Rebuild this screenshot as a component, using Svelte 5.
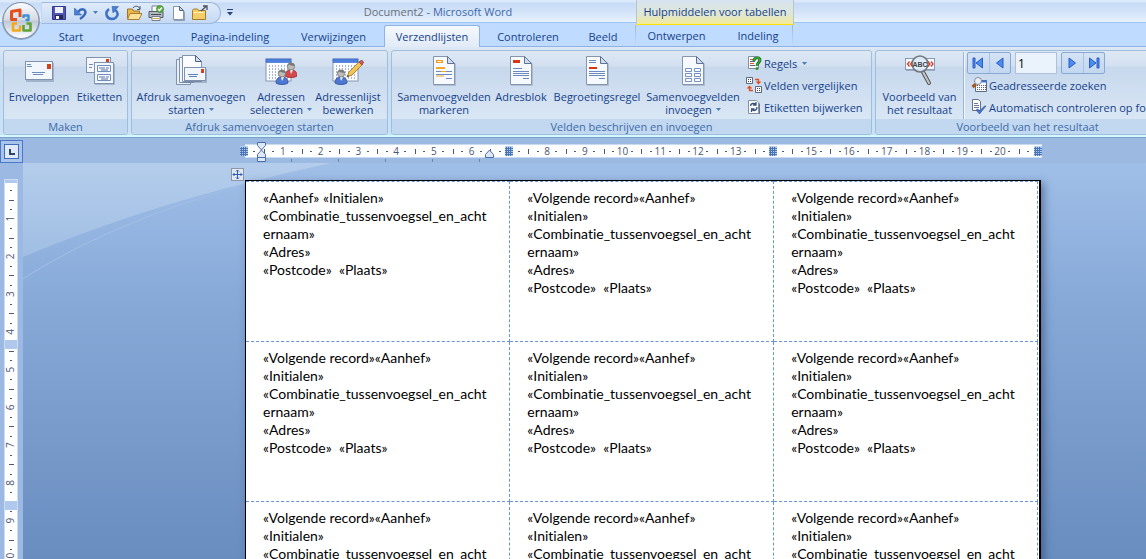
<script lang="ts">
	type Tab = { label: string; active?: boolean; context?: boolean };

	const tabs: Tab[] = [
		{ label: 'Start' },
		{ label: 'Invoegen' },
		{ label: 'Pagina-indeling' },
		{ label: 'Verwijzingen' },
		{ label: 'Verzendlijsten', active: true },
		{ label: 'Controleren' },
		{ label: 'Beeld' },
		{ label: 'Ontwerpen', context: true },
		{ label: 'Indeling', context: true }
	];

	const firstLabel = [
		'«Aanhef» «Initialen»',
		'«Combinatie_tussenvoegsel_en_acht',
		'ernaam»',
		'«Adres»',
		'«Postcode»  «Plaats»'
	];

	const nextLabel = [
		'«Volgende record»«Aanhef»',
		'«Initialen»',
		'«Combinatie_tussenvoegsel_en_acht',
		'ernaam»',
		'«Adres»',
		'«Postcode»  «Plaats»'
	];

	const rows = [
		[firstLabel, nextLabel, nextLabel],
		[nextLabel, nextLabel, nextLabel],
		[nextLabel, nextLabel, nextLabel]
	];

	// One centimetre on the rulers at 100% zoom
	const CM = 37.75;
	const hMarks = Array.from({ length: 84 }, (_, i) => i + 1);
	const vMarks = Array.from({ length: 42 }, (_, i) => i + 1);
	const tabStops = Array.from({ length: 5 }, (_, i) => 46 + i * 47);
	const columnMarks = [-1, 264, 528, 793];

	let record = $state('1');
</script>

{#snippet caret()}
	<svg class="caret" width="5" height="3" viewBox="0 0 5 3"><path d="M0 0h5L2.5 3z" fill="#4a7ebb" /></svg>
{/snippet}

{#snippet sheet()}
	<path d="M6 3h14l8 7v22H6z" fill="#8898b0" opacity=".45" />
	<path d="M5.500 2.500h14l7 7v21h-21z" fill="#f6f9fe" stroke="#8595ae" />
	<path d="M19.500 2.500v7h7z" fill="#cfdcf0" stroke="#5f7494" />
{/snippet}

{#snippet person(x: number, y: number, shirt: string, dark: string)}
	<g transform="translate({x} {y})">
		<path d="M0 14c0-4 2-6 6-6s6 2 6 6c-3 2-9 2-12 0z" fill={shirt} stroke={dark} stroke-width=".8" />
		<path d="M5 8l1 4 2-4z" fill="#fff" />
		<circle cx="6" cy="4.500" r="3.600" fill="#bcbcb8" stroke="#747474" stroke-width=".8" />
		<path d="M2.300 4.500C2 0 10 0 9.800 4 7 4 5 3 4 2.500z" fill="#777" />
	</g>
{/snippet}

{#snippet calendar()}
	<rect x="1" y="5" width="25" height="22" fill="#f9fbff" stroke="#8796ad" />
	<rect x="1" y="5" width="25" height="3.500" fill="#4b7fe0" stroke="#3766c4" stroke-width=".6" />
	<path d="M4 12h20M4 15h20M4 18h20M4 21h20M4 24h20" stroke="#62718c" stroke-dasharray="1 2" />
{/snippet}

{#snippet bigIcon(name: string)}
	<svg width="32" height="32" viewBox="0 0 32 32" aria-hidden="true">
		{#if name === 'envelope'}
			<rect x="3" y="9" width="28" height="19" fill="#6d7f9b" opacity=".45" />
			<rect x="2.500" y="7.500" width="27" height="18" fill="#f2f6fd" stroke="#7f92b0" />
			<rect x="24" y="10" width="4" height="5" fill="#d8401c" />
			<path d="M4 10.500h4M4 12.500h5M9 18.500h13M10 20.500h10" stroke="#6f8cc0" />
		{:else if name === 'labels'}
			<rect x="2.500" y="3.500" width="24" height="15" fill="#f4f7fd" stroke="#7f92b0" />
			<rect x="22" y="5" width="3" height="3" fill="#d8401c" />
			<path d="M5 10.500h4M5 13.500h3" stroke="#6f8cc0" />
			<rect x="11" y="10" width="20" height="21" fill="#6d7f9b" opacity=".4" />
			<rect x="10.500" y="8.500" width="19" height="21" fill="#f2f6fd" stroke="#7f92b0" />
			<path d="M13.500 11.500h13v6h-13zM13.500 20.500h13v6h-13z" fill="#fff" stroke="#6f8cc0" />
			<path d="M15 14h6M22 14h3M17 16h7M15 23h6M22 23h3M17 25h7" stroke="#4d6da8" />
		{:else if name === 'merge'}
			<path d="M1.500 5.500h14v25h-14z" fill="#e8eef8" stroke="#8192ad" />
			<path d="M4.500 3.500h14v25h-14z" fill="#f0f4fb" stroke="#8192ad" />
			<path d="M7.500 1.500h13l6 6v20h-19z" fill="#fafcff" stroke="#8192ad" />
			<path d="M20.500 1.500v6h6z" fill="#d4e0f2" stroke="#4f6484" />
			<rect x="10" y="15" width="22" height="14" fill="#6d7f9b" opacity=".45" />
			<rect x="9.500" y="13.500" width="21" height="13" fill="#f2f6fd" stroke="#7f92b0" />
			<rect x="26" y="15" width="3" height="4" fill="#d8401c" />
			<path d="M13 20.500h10M14 22.500h8" stroke="#5f80bd" />
		{:else if name === 'recipients'}
			{@render calendar()}
			{@render person(20, 8, '#d4494e', '#9e2026')}
			{@render person(11, 15, '#4e77d2', '#2a4d9d')}
		{:else if name === 'edit-list'}
			{@render calendar()}
			{@render person(3, 15, '#4e77d2', '#2a4d9d')}
			<path d="M15 23l2-5L27 8l3 3-10 10z" fill="#f2c651" stroke="#9a6e24" stroke-width=".8" />
			<path d="M27 8l2-1.500c1-.7 3 1.500 2.300 2.500L30 11z" fill="#d35b5b" stroke="#8e3434" stroke-width=".7" />
			<path d="M15 23l1-2 1.200 1.200z" fill="#333" />
		{:else if name === 'highlight'}
			{@render sheet()}
			<path d="M8 7.500h7" stroke="#f29a1c" stroke-width="3" />
			<path d="M9.500 7.500h4" stroke="#fff" />
			<path d="M8 14h9" stroke="#f5a52a" stroke-width="2" />
			<path d="M8 17.500h5M18 17.500h6M8 20.500h16M18 24.500h6" stroke="#6b8ac2" />
			<path d="M13 17.500h5M8 22h8" stroke="#f5a52a" />
		{:else if name === 'address'}
			{@render sheet()}
			<rect x="8" y="6" width="7" height="3" fill="#d8360f" />
			<path d="M8 14.500h9M8 17.500h16M8 19.500h16M8 21.500h16M18 24.500h6" stroke="#6b8ac2" />
		{:else if name === 'greeting'}
			{@render sheet()}
			<rect x="8" y="13" width="8" height="2" fill="#d8360f" />
			<path d="M8 6.500h7M8 8.500h7M8 17.500h16M8 19.500h16M8 21.500h16M18 24.500h6" stroke="#6b8ac2" />
		{:else if name === 'field'}
			{@render sheet()}
			{#each [14.5, 19.5, 24.5] as y}
				<path d="M8.500 {y}h6v3h-6zM17.500 {y}h6v3h-6z" fill="#fff" stroke="#7590c2" />
			{/each}
		{:else if name === 'preview'}
			<rect x="1.500" y="4.500" width="29" height="11" fill="#f4f8ff" stroke="#8a9ab5" />
			<path d="M2 16.500h29" stroke="#71829c" opacity=".5" />
			<path d="M5.500 7.500L3.500 10l2 2.500M8.500 7.500L6.500 10l2 2.500M24 7.500l2 2.500-2 2.500M27 7.500l2 2.500-2 2.500" fill="none" stroke="#dd3a22" stroke-width="1.300" />
			<path d="M19 18l6 11" stroke="#555" stroke-width="4" stroke-linecap="round" />
			<path d="M19 18l6 11" stroke="#c3c6ca" stroke-width="2" stroke-linecap="round" />
			<circle cx="16" cy="10" r="8" fill="#dce9f7" fill-opacity=".9" stroke="#72777e" stroke-width="1.600" />
			<text x="16" y="13" text-anchor="middle" font-family="Liberation Sans" font-size="7" font-weight="bold" fill="#444">ABC</text>
		{/if}
	</svg>
{/snippet}

{#snippet smallIcon(name: string)}
	<svg width="16" height="16" viewBox="0 0 16 16" aria-hidden="true">
		{#if name === 'rules'}
			<path d="M2.500 1.500h8l2 2v10h-10z" fill="#fff" stroke="#8290a5" />
			<path d="M4 4.500h4M4 8.500h4" stroke="#e2552d" />
			<path d="M4 6.500h5M4 10.500h5" stroke="#53627c" />
			<path d="M8 6c0-4 6-4 6-1 0 3-3 2-3 6" fill="none" stroke="#1d7d25" stroke-width="3" />
			<path d="M8 6c0-4 6-4 6-1 0 3-3 2-3 6" fill="none" stroke="#55c24e" />
			<circle cx="11" cy="13.500" r="1.500" fill="#2d9a32" />
		{:else if name === 'match'}
			<path d="M.5.500h6v6h-6zM9.500 9.500h6v6h-6z" fill="#fff" stroke="#5b6880" />
			<path d="M2 2.500h4M2 4.500h4M11 11.500h4M11 13.500h4" stroke="#38455e" stroke-dasharray="1 1" />
			<path d="M9 2.500h3.500v3M10.500 4.500l2 2 2-2M7 13.500H3.500v-3M1.500 11.500l2-2 2 2" fill="none" stroke="#e04f20" stroke-width="1.300" />
		{:else if name === 'refresh'}
			<path d="M3 3h9l2 2v10H3z" fill="#64748e" />
			<path d="M2.500 1.500h8l2 2v11h-10z" fill="#fff" stroke="#8290a5" />
			<path d="M4.500 7c0-3 4-3 5-2M10 3v3H7M11 8c0 4-4 4-5 2.500M5.500 13v-3h3" fill="none" stroke="#36527c" stroke-width="1.300" />
		{:else if name === 'find'}
			<path d="M4.500 3.500h11v11h-11z" fill="#fff" stroke="#5a6b86" />
			<path d="M10 4.500h6" stroke="#3e72d7" stroke-width="2" />
			<path d="M6 8.500h9M6 10.500h9M6 12.500h9" stroke="#54627a" stroke-dasharray="1 1" />
			<path d="M5 7L1.500 10" stroke="#a6581c" stroke-width="3" />
			<circle cx="7" cy="4" r="3.500" fill="#e8f1fb" stroke="#858b94" />
		{:else if name === 'check'}
			<path d="M1.500.500h6l2 2v9h-8z" fill="#fff" stroke="#627087" />
			<path d="M3 4.500h4M3 6.500h5M3 8.500h5" stroke="#657ba4" />
			<path d="M5 11l3.500 4L15 7h-1.500L8.500 12 7 10z" fill="#4a76c9" stroke="#2c519c" stroke-width=".6" />
		{:else if name === 'save'}
			<path d="M1.500 1.500h13v13h-13z" fill="#5153b5" stroke="#35378e" />
			<path d="M4 2h8v6H4z" fill="#eff2fc" />
			<path d="M4 10h8v4H4z" fill="#262b55" />
			<path d="M5 11h3v3H5z" fill="#fff" />
		{:else if name === 'undo'}
			<path d="M5 7c4-5 9-2 7 2-1 2-2 3-5 5" fill="none" stroke="#3669bd" stroke-width="2.500" />
			<path d="M1.500 3v7h7z" fill="#4b80d1" stroke="#315fae" stroke-width=".6" />
		{:else if name === 'redo'}
			<path d="M5 4C0 8 3 14 8 14s8-6 3-9" fill="none" stroke="#3d71c5" stroke-width="2.500" />
			<path d="M8 1.500h6.500L9 8z" fill="#4b80d1" stroke="#315fae" stroke-width=".6" />
		{:else if name === 'open'}
			<path d="M1.500 13V4h5l1 2h6v7z" fill="#edb744" stroke="#9c742b" />
			<path d="M1.500 14.500L4 8.500h12l-3 6z" fill="#ffe197" stroke="#a77d31" />
			<path d="M7 3c2-3 6-2 7 1M14 1v3.500h-3" fill="none" stroke="#4b5971" />
		{:else if name === 'print'}
			<path d="M4 1h7v6H4z" fill="#fff" stroke="#777f8a" />
			<path d="M1 6.500h14v6H1z" fill="#b4b9c1" stroke="#565d67" />
			<path d="M3 9.500h10" stroke="#474d56" />
			<path d="M4 11.500h8v4H4z" fill="#fff" stroke="#777f8a" />
			<path d="M5 13.500h6" stroke="#d6a53a" />
			<circle cx="12" cy="4" r="3.500" fill="#63ae45" stroke="#2f7d2b" stroke-width=".7" />
			<path d="M10 4l1.500 1.500L14 2.500" fill="none" stroke="#fff" stroke-width="1.200" />
		{:else if name === 'new'}
			<path d="M4 3h7l4 4v9H4z" fill="#667894" opacity=".6" />
			<path d="M3.500 1.500h6l4 4v9h-10z" fill="#fff" stroke="#8794aa" />
			<path d="M9.500 1.500v4h4z" fill="#cad9ef" stroke="#52657f" />
		{:else if name === 'folder'}
			<path d="M.5 14.500v-9l1-1.500h4l1 1.500h7v9z" fill="#f4cc68" stroke="#a57c2e" />
			<path d="M1.500 7.500h11" stroke="#ffeeb2" />
			<path d="M9 6l5-4.500M11 1h4v4" fill="none" stroke="#4c525c" stroke-width="1.300" />
		{:else if name === 'first'}
			<path d="M3 3h2v10H3zM12.500 3v10L6 8z" fill="#4a8cf0" stroke="#2a5cc4" />
		{:else if name === 'prev'}
			<path d="M11 3v10L4.500 8z" fill="#4a8cf0" stroke="#2a5cc4" />
		{:else if name === 'next'}
			<path d="M5 3v10l6.500-5z" fill="#4a8cf0" stroke="#2a5cc4" />
		{:else if name === 'last'}
			<path d="M11 3h2v10h-2zM3.500 3v10L10 8z" fill="#4a8cf0" stroke="#2a5cc4" />
		{/if}
	</svg>
{/snippet}

{#snippet bigButton(icon: string, line1: string, line2 = '', drop = false)}
	<button class="big" type="button">
		{@render bigIcon(icon)}
		<span class="caption">
			<span>{line1}</span>
			{#if line2}<span>{line2}{#if drop}{@render caret()}{/if}</span>{/if}
		</span>
	</button>
{/snippet}

{#snippet smallButton(icon: string, label: string, drop = false)}
	<button class="small" type="button">
		{@render smallIcon(icon)}
		<span>{label}</span>
		{#if drop}{@render caret()}{/if}
	</button>
{/snippet}

{#snippet columnMark(x: number, y: number)}
	<g transform="translate({x} {y})">
		<rect x="-4" y="-1" width="8" height="10" fill="#b3cbec" />
		<path d="M-4 1.500h8M-4 3.500h8M-4 5.500h8M-4 7.500h8M-2.500 0v9M-.5 0v9M1.500 0v9" stroke="#4a75b4" />
	</g>
{/snippet}

<div class="word">
	<header class="titlebar">
		<button class="office" type="button" aria-label="Office-knop">
			<svg width="42" height="42" viewBox="0 0 42 42">
				<defs>
					<linearGradient id="orb" x1="0" y1="0" x2="0" y2="1">
						<stop offset="0" stop-color="#fafbfd" />
						<stop offset=".48" stop-color="#d5dbe4" />
						<stop offset=".52" stop-color="#bfc8d5" />
						<stop offset="1" stop-color="#ffffff" />
					</linearGradient>
				</defs>
				<circle cx="21" cy="21" r="19" fill="#5d7597" opacity=".55" />
				<circle cx="21" cy="20.500" r="18" fill="url(#orb)" stroke="#8292a8" />
				<g fill="none" stroke-width="3" stroke-linejoin="round">
					<path d="M17 19.500h-5.500v-8l8.500-1.500v7" stroke="#e3501b" />
					<path d="M23.500 18v-2.500h5v4.500h-3" stroke="#3e8fd6" stroke-width="2.400" />
					<path d="M17 23.500h-4v7h7v-5" stroke="#f2a91c" stroke-width="2.600" />
					<path d="M23.500 25v5.500h7v-7h-4" stroke="#5ea33a" stroke-width="2.600" />
				</g>
			</svg>
		</button>
		<div class="quick">
			<div class="pill">
				<button type="button" aria-label="Opslaan">{@render smallIcon('save')}</button>
				<button class="undo" type="button" aria-label="Ongedaan maken">{@render smallIcon('undo')}{@render caret()}</button>
				<button type="button" aria-label="Opnieuw">{@render smallIcon('redo')}</button>
				<button type="button" aria-label="Openen">{@render smallIcon('open')}</button>
				<button type="button" aria-label="Afdrukken">{@render smallIcon('print')}</button>
				<button type="button" aria-label="Nieuw">{@render smallIcon('new')}</button>
				<button type="button" aria-label="Map">{@render smallIcon('folder')}</button>
			</div>
			<button class="customize" type="button" aria-label="Werkbalk aanpassen">
				<svg width="6" height="7" viewBox="0 0 6 7"><path d="M0 .500h6" stroke="#27457a" /><path d="M0 3h6L3 6.500z" fill="#27457a" /></svg>
			</button>
		</div>
		<h1><span>Document2</span> - Microsoft Word</h1>
		<div class="context-title">Hulpmiddelen voor tabellen</div>
	</header>

	<nav class="tabs">
		{#each tabs as tab}
			<button class="tab" class:active={tab.active} class:context={tab.context} type="button">{tab.label}</button>
		{/each}
	</nav>

	<div class="ribbon">
		<section class="group make">
			<div class="body">
				{@render bigButton('envelope', 'Enveloppen')}
				{@render bigButton('labels', 'Etiketten')}
			</div>
			<h2>Maken</h2>
		</section>
		<section class="group start">
			<div class="body">
				{@render bigButton('merge', 'Afdruk samenvoegen', 'starten', true)}
				{@render bigButton('recipients', 'Adressen', 'selecteren', true)}
				{@render bigButton('edit-list', 'Adressenlijst', 'bewerken')}
			</div>
			<h2>Afdruk samenvoegen starten</h2>
		</section>
		<section class="group fields">
			<div class="body">
				{@render bigButton('highlight', 'Samenvoegvelden', 'markeren')}
				{@render bigButton('address', 'Adresblok')}
				{@render bigButton('greeting', 'Begroetingsregel')}
				{@render bigButton('field', 'Samenvoegvelden', 'invoegen', true)}
				<div class="stack">
					{@render smallButton('rules', 'Regels', true)}
					{@render smallButton('match', 'Velden vergelijken')}
					{@render smallButton('refresh', 'Etiketten bijwerken')}
				</div>
			</div>
			<h2>Velden beschrijven en invoegen</h2>
		</section>
		<section class="group preview">
			<div class="body">
				{@render bigButton('preview', 'Voorbeeld van', 'het resultaat')}
				<div class="stack ruled">
					<div class="record-nav">
						<div class="pair">
							<button type="button" aria-label="Eerste record">{@render smallIcon('first')}</button>
							<button type="button" aria-label="Vorige record">{@render smallIcon('prev')}</button>
						</div>
						<input aria-label="Record" bind:value={record} />
						<div class="pair">
							<button type="button" aria-label="Volgende record">{@render smallIcon('next')}</button>
							<button type="button" aria-label="Laatste record">{@render smallIcon('last')}</button>
						</div>
					</div>
					{@render smallButton('find', 'Geadresseerde zoeken')}
					{@render smallButton('check', 'Automatisch controleren op fouten')}
				</div>
			</div>
			<h2>Voorbeeld van het resultaat</h2>
		</section>
	</div>

	<div class="ruler-bar">
		<button class="tab-kind" type="button" aria-label="Linkertab">
			<svg width="15" height="15" viewBox="0 0 15 15">
				<rect x=".5" y=".5" width="14" height="14" fill="#dfe9f8" stroke="#3f6cc0" />
				<path d="M6 5v5h5" fill="none" stroke="#2c456f" stroke-width="2" />
			</svg>
		</button>
		<svg class="h-ruler" width="800" height="22" viewBox="-4 0 800 22">
			<rect x="0" y="5" width="797" height="12" fill="#fff" />
			<path d="M0 4.500h797M0 17.500h797" stroke="#c9dbf3" />
			{#each hMarks as i}
				{#if i % 4 === 0}
					<text x={(i * CM) / 4} y="15">{i % 28 === 0 ? '' : i / 4}</text>
				{:else if i % 2 === 0}
					<path d="M{Math.round((i * CM) / 4)}.5 9v5" stroke="#4c5871" />
				{:else}
					<path d="M{Math.round((i * CM) / 4) - 1} 11.500h2" stroke="#4c5871" />
				{/if}
			{/each}
			{#each tabStops as x}
				<path d="M{x}.5 19v3" stroke="#73839f" />
			{/each}
			{#each columnMarks as x}
				{@render columnMark(x, 7)}
			{/each}
			<path d="M12.500 2.500h8v3l-4 4.500-4-4.500zM12.500 17.500v-3l4-4.500 4 4.500v3zM12.500 17.500h8v4h-8z" fill="#dde7f6" stroke="#4c6ea8" />
			<path d="M240.500 17.500v-3l4-4.500 4 4.500v3z" fill="#dde7f6" stroke="#4c6ea8" />
		</svg>
	</div>

	<main class="workspace">
		<aside class="side-ruler">
			<svg width="14" height="396" viewBox="0 0 14 396">
				<rect x=".5" y="16.500" width="13" height="380" fill="#fff" stroke="#cddcf3" />
				{#each vMarks as i}
					{#if i % 4 === 0}
						<text transform="translate(10 {18 + (i * CM) / 4}) rotate(-90)">{i / 4}</text>
					{:else if i % 2 === 0}
						<path d="M5 {Math.round(18 + (i * CM) / 4)}.5h5" stroke="#4c5871" />
					{:else}
						<path d="M6 {Math.round(18 + (i * CM) / 4)}.5h2" stroke="#4c5871" />
					{/if}
				{/each}
				<rect x="1" y="17" width="12" height="3" fill="#afc8ec" />
				<rect x="1" y="177" width="12" height="9" fill="#afc8ec" />
				<rect x="1" y="338" width="12" height="9" fill="#afc8ec" />
			</svg>
		</aside>
		<div class="canvas">
			<svg class="swoosh" viewBox="0 0 320 140" width="320" height="140" aria-hidden="true">
				<defs>
					<linearGradient id="sky" x1="0" y1="0" x2="0" y2="1">
						<stop offset="0" stop-color="#b4cdec" />
						<stop offset="1" stop-color="#a0bee3" />
					</linearGradient>
				</defs>
				<path d="M0 0h310Q140 35 0 94z" fill="url(#sky)" />
				<path d="M310 0Q110 42-10 122" fill="none" stroke="#a2bfe5" />
			</svg>
			<span class="move" aria-hidden="true">
				<svg width="13" height="13" viewBox="0 0 13 13">
					<rect x=".5" y=".5" width="12" height="12" fill="#e3e9f1" stroke="#8b97a9" />
					<path d="M6.500 2v9M2 6.500h9M5 3.500l1.500-1.500L8 3.500M5 9.500L6.500 11 8 9.500M3.500 5L2 6.500 3.500 8M9.500 5L11 6.500 9.500 8" fill="none" stroke="#2b5cbb" />
				</svg>
			</span>
			<div class="page">
				<table>
					<tbody>
						{#each rows as row}
							<tr>
								{#each row as label}
									<td>
										{#each label as line}<p>{line}</p>{/each}
									</td>
								{/each}
							</tr>
						{/each}
					</tbody>
				</table>
			</div>
		</div>
	</main>
</div>

<style>
	:global(body) {
		overflow: hidden;
	}

	.word {
		display: flex;
		flex-direction: column;
		height: 100vh;
		overflow: hidden;
		background: #9cb9e1;
		font-family: 'Open Sans', 'Noto Sans', sans-serif;
		font-size: 11px;
		line-height: 13px;
		color: #15428b;
	}

	.word * {
		box-sizing: border-box;
	}

	button {
		display: flex;
		align-items: center;
		justify-content: center;
		padding: 0;
		border: 0;
		background: none;
		font: inherit;
		color: inherit;
		white-space: nowrap;
	}

	svg {
		display: block;
		flex: none;
	}

	h1,
	h2,
	p {
		margin: 0;
		font-size: inherit;
		font-weight: normal;
	}

	/* --- Title bar --- */

	.titlebar {
		position: relative;
		flex: none;
		display: grid;
		grid-template-columns: 240px 396px 158px 1fr;
		height: 23px;
		border-bottom: 1px solid #9cc6f3;
		background: linear-gradient(#dce9fa 2px, #c6dbf6 3px, #d3e3f8 12px, #e8f2fd);
	}

	.office {
		position: absolute;
		top: 0;
		left: 0;
		z-index: 2;
	}

	.quick {
		display: flex;
		align-items: center;
		gap: 6px;
		padding-left: 41px;
	}

	.pill {
		display: flex;
		align-items: center;
		gap: 6px;
		width: 180px;
		height: 22px;
		padding-left: 9px;
		border: 1px solid #9db9de;
		border-left-color: #c4d6ef;
		border-radius: 0 11px 11px 0;
		background: linear-gradient(#dfebfa, #c5d9f3);
	}

	.undo {
		gap: 4px;
	}

	h1 {
		color: #3e6aaa;
		line-height: 24px;
		text-align: center;
	}

	h1 span {
		color: #69707c;
	}

	.context-title {
		border: solid #b9c6c9;
		border-width: 0 1px;
		border-bottom: 1px solid #ffe000;
		background: linear-gradient(#d6e4f2, #dfe6d4 60%, #f3ea96);
		line-height: 24px;
		text-align: center;
	}

	/* --- Tabs --- */

	.tabs {
		flex: none;
		display: grid;
		grid-template-columns: 48px 72px 106px 91px 96px 86px 54px 83px 70px;
		column-gap: 5px;
		height: 24px;
		padding: 2px 0 0 47px;
		border-bottom: 1px solid #8db2e3;
		background: #bfdbff;
	}

	.tab {
		height: 22px;
		padding-bottom: 1px;
		border: 1px solid transparent;
		border-bottom: 0;
	}

	.tab.active {
		border-color: #8db2e3;
		border-radius: 3px 3px 0 0;
		background: linear-gradient(#f5f9ff, #e1eaf6);
	}

	.tab.context {
		border: 0;
		background: linear-gradient(#9fb6d3, transparent) left / 1px 100% no-repeat;
	}

	.tab.context + .tab.context {
		background-position: right;
	}

	/* --- Ribbon --- */

	.ribbon {
		flex: none;
		display: flex;
		gap: 3px;
		height: 90px;
		padding: 3px 0 0 3px;
		border-bottom: 2px solid #d4f7fd;
		background: linear-gradient(#dde8f5, #cbdcf0 20%, #c8e2f7);
		overflow: hidden;
	}

	.group {
		flex: none;
		display: flex;
		flex-direction: column;
		border: 1px solid #9ebfdb;
		border-radius: 3px;
		background: linear-gradient(#dee8f5, #d3e0f0 15px, #c7d8ed 16px, #d9e6f4 68px);
		overflow: hidden;
	}

	.body {
		flex: 1;
		display: grid;
	}

	.group h2 {
		flex: none;
		height: 15px;
		background: #c1d8f0;
		color: #3e6aaa;
		line-height: 15px;
		text-align: center;
	}

	.make {
		width: 125px;
	}

	.make .body {
		grid-template-columns: 70px 51px;
	}

	.start {
		width: 257px;
	}

	.start .body {
		grid-template-columns: 118px 62px 72px;
	}

	.fields {
		width: 481px;
	}

	.fields .body {
		grid-template-columns: 104px 50px 102px 90px 1fr;
	}

	.preview {
		width: 305px;
	}

	.preview .body {
		grid-template-columns: 87px 1fr;
	}

	.big {
		flex-direction: column;
		justify-content: flex-start;
		gap: 4px;
		padding-top: 3px;
	}

	.caption {
		display: flex;
		flex-direction: column;
		align-items: center;
	}

	.caption > span {
		display: flex;
		align-items: center;
		gap: 4px;
	}

	.stack {
		display: grid;
		grid-template-rows: 22px 22px 22px;
		margin-top: 1px;
		padding-left: 8px;
	}

	.ruled {
		padding-left: 3px;
		border-left: 1px solid #9ab4d4;
		box-shadow: inset 1px 0 #f2f7fd;
	}

	.small {
		justify-content: flex-start;
		gap: 2px;
	}

	.ruled .small {
		padding-left: 4px;
	}

	.small .caret {
		margin-left: 3px;
	}

	.record-nav {
		display: flex;
		gap: 4px;
	}

	.pair {
		display: flex;
		width: 44px;
		height: 22px;
		border: 1px solid #88a9d6;
		border-radius: 2px;
		background: linear-gradient(#d4e2f4, #c2d7f0);
	}

	.pair button {
		flex: 1;
	}

	.pair button + button {
		border-left: 1px solid #a9c3e5;
	}

	input {
		width: 42px;
		height: 22px;
		padding: 0 2px;
		border: 1px solid #abc1de;
		background: #eaf2fb;
		font: inherit;
		font-size: 12px;
		color: #000;
	}

	/* --- Rulers --- */

	.ruler-bar {
		flex: none;
		display: flex;
		gap: 218px;
		height: 26px;
		padding-top: 2px;
		border-top: 1px solid #7f9fcb;
	}

	.tab-kind {
		width: 23px;
		border: 1px solid #4b78c9;
		background: #a9c4ea;
	}

	.h-ruler {
		overflow: visible;
	}

	.h-ruler text,
	.side-ruler text {
		fill: #4c5871;
		font-size: 10px;
		text-anchor: middle;
	}

	/* --- Document --- */

	.workspace {
		flex: 1;
		display: flex;
		min-height: 0;
	}

	.side-ruler {
		flex: none;
		width: 23px;
		padding-left: 4px;
		background: #9cb9e3;
		overflow: hidden;
	}

	.canvas {
		position: relative;
		flex: 1;
		display: flex;
		align-items: flex-start;
		gap: 1px;
		min-width: 0;
		padding: 5px 0 0 208px;
		background: linear-gradient(#a0bfe8, #87a9d8 35%, #698dbf);
		overflow: hidden;
	}

	.swoosh {
		position: absolute;
		top: 0;
		left: 0;
	}

	.move {
		position: relative;
	}

	.page {
		position: relative;
		flex: none;
		margin-top: 12px;
		border: 1px solid #000;
		border-right-width: 2px;
		background: #fff;
		box-shadow: 3px 3px 8px rgba(30, 55, 100, 0.5);
	}

	table {
		width: 792px;
		margin-right: 1px;
		border-collapse: collapse;
		table-layout: fixed;
	}

	td {
		height: 160px;
		padding: 7px 0 0 17px;
		border: 1px dashed #6795dc;
		border-left: 0;
		vertical-align: top;
		font-family: Lato, Carlito, sans-serif;
		font-size: 14px;
		font-variant-ligatures: none;
		line-height: 18px;
		color: #000;
		white-space: pre;
	}
</style>
